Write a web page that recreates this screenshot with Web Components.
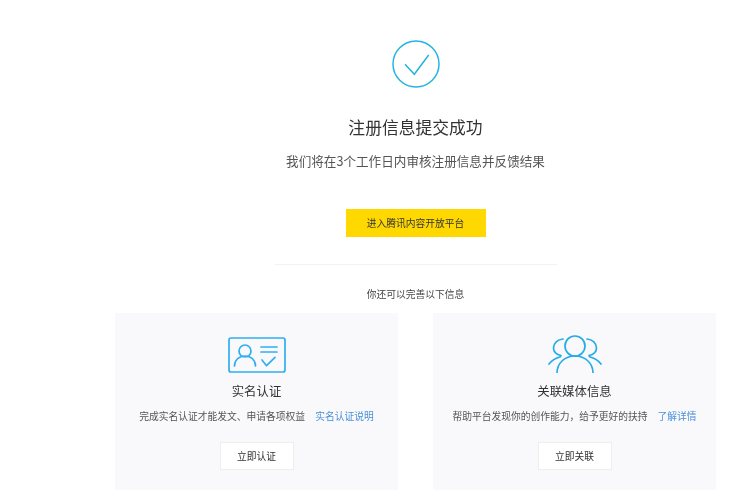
<!DOCTYPE html>
<html lang="zh">
<head>
<meta charset="utf-8">
<title>注册信息提交成功</title>
<style>
  html, body { margin: 0; background: #fff; }
  body { font-family: "Noto Sans CJK SC", "Liberation Sans", sans-serif; color: #333; }
</style>
</head>
<body>
<success-page>
  <status-head slot="head" title="注册信息提交成功" sub="我们将在3个工作日内审核注册信息并反馈结果"></status-head>
  <info-card heading="实名认证" slot="left" action="立即认证" link="实名认证说明" desc="完成实名认证才能发文、申请各项权益">
    <svg slot="icon" width="58" height="36" viewBox="0 0 58 36" fill="none" stroke="#2faef2" stroke-width="1.700" stroke-linecap="round" stroke-linejoin="round">
      <rect x="1" y="1" width="56" height="34" rx="2"/>
      <circle cx="17" cy="14" r="6"/>
      <path d="M6.500 29c0-6 4.500-10 10.500-10s10.500 4 10.500 10"/>
      <path d="M33 10h16M33 15h16"/>
      <path d="M34 23l4.500 5.700 8.500-8.400"/>
    </svg>
  </info-card>
  <info-card heading="关联媒体信息" slot="right" action="立即关联" link="了解详情" desc="帮助平台发现你的创作能力，给予更好的扶持">
    <svg slot="icon" width="56" height="44" viewBox="0 0 56 44" fill="none" stroke="#25ace6" stroke-width="1.700" stroke-linecap="round">
      <circle cx="28" cy="17" r="10"/>
      <path d="M10 44c0-10 8-17 18-17s18 7 18 17"/>
      <path d="M16 10c-5.500 .5-9.500 4-9.500 9 0 3.500 3 6.500 7.500 7.500"/>
      <path d="M40 10c5.500 .5 9.500 4 9.500 9 0 3.500-3 6.500-7.500 7.500"/>
      <path d="M2 35c2.500-3.500 6.500-6 11.500-7.300"/>
      <path d="M54 35c-2.500-3.500-6.500-6-11.500-7.300"/>
    </svg>
  </info-card>
</success-page>

<script>
(function() {
  // check mark circle, title and the line below it
  class StatusHead extends HTMLElement {
    constructor() {
      super();
      this.attachShadow({ mode: "open" }).innerHTML = `
        <style>
          :host { display: flex; flex-direction: column; align-items: center; }
          svg { display: block; margin-top: 40px; }
          h1 { margin: 26px 0 0; font-size: 16.800px; line-height: 26px; font-weight: 400; color: #333; }
          p { margin: 11px 0 0; font-size: 12.600px; line-height: 20px; color: #555; }
        </style>
        <svg width="48" height="48" viewBox="0 0 48 48" fill="none" stroke="#25b4de" stroke-width="1.500">
          <circle cx="24" cy="24" r="23"/>
          <path d="M13 24.300l9.300 10 14.400-19.300"/>
        </svg>
        <h1></h1>
        <p></p>`;
    }
    connectedCallback() {
      this.shadowRoot.querySelector("h1").textContent = this.getAttribute("title");
      this.shadowRoot.querySelector("p").textContent = this.getAttribute("sub");
    }
  }

  class InfoCard extends HTMLElement {
    constructor() {
      super();
      this.attachShadow({ mode: "open" }).innerHTML = `
        <style>
          :host { display: flex; flex-direction: column; align-items: center; width: 283px; height: 177px; background: #f9f9fb; }
          .icon { height: 44px; margin-top: 16px; display: flex; align-items: flex-end; justify-content: center; }
          h2 { margin: 8px 0 0; font-size: 12.400px; line-height: 20px; font-weight: 400; color: #333; }
          p { margin: 8px 0 0; font-size: 9.750px; line-height: 14px; color: #555; white-space: nowrap; }
          a { margin-left: 8px; color: #4a90d9; text-decoration: none; }
          button { margin-top: 19px; width: 74px; height: 28px; padding: 0; background: #fff; border: 1px solid #eee; font: inherit; font-size: 9.750px; color: #333; }
        </style>
        <div class="icon"><slot name="icon"></slot></div>
        <h2></h2>
        <p><span></span> <a href="#"></a></p>
        <button></button>`;
    }
    connectedCallback() {
      let root = this.shadowRoot;
      root.querySelector("h2").textContent = this.getAttribute("heading");
      root.querySelector("span").textContent = this.getAttribute("desc");
      root.querySelector("a").textContent = this.getAttribute("link");
      root.querySelector("button").textContent = this.getAttribute("action");
    }
  }

  class SuccessPage extends HTMLElement {
    constructor() {
      super();
      this.attachShadow({ mode: "open" }).innerHTML = `
        <style>
          :host { display: flex; flex-direction: column; align-items: center; width: 601px; margin-left: 115px; filter: blur(.3px); }
          .enter { margin-top: 38px; width: 140px; height: 28px; padding: 0; border: 0; background: #ffd800; font: inherit; font-size: 9.750px; color: #333; }
          hr { width: 282px; height: 1px; margin: 27px 0 0; border: 0; background: #f2f2f2; }
          .more { margin: 22px 0 0; font-size: 9.750px; line-height: 14px; color: #444; }
          .cards { display: flex; gap: 35px; margin-top: 12px; }
        </style>
        <slot name="head"></slot>
        <button class="enter">进入腾讯内容开放平台</button>
        <hr>
        <p class="more">你还可以完善以下信息</p>
        <div class="cards"><slot name="left"></slot><slot name="right"></slot></div>`;
    }
  }

  customElements.define("status-head", StatusHead);
  customElements.define("info-card", InfoCard);
  customElements.define("success-page", SuccessPage);
})();
</script>
</body>
</html>
